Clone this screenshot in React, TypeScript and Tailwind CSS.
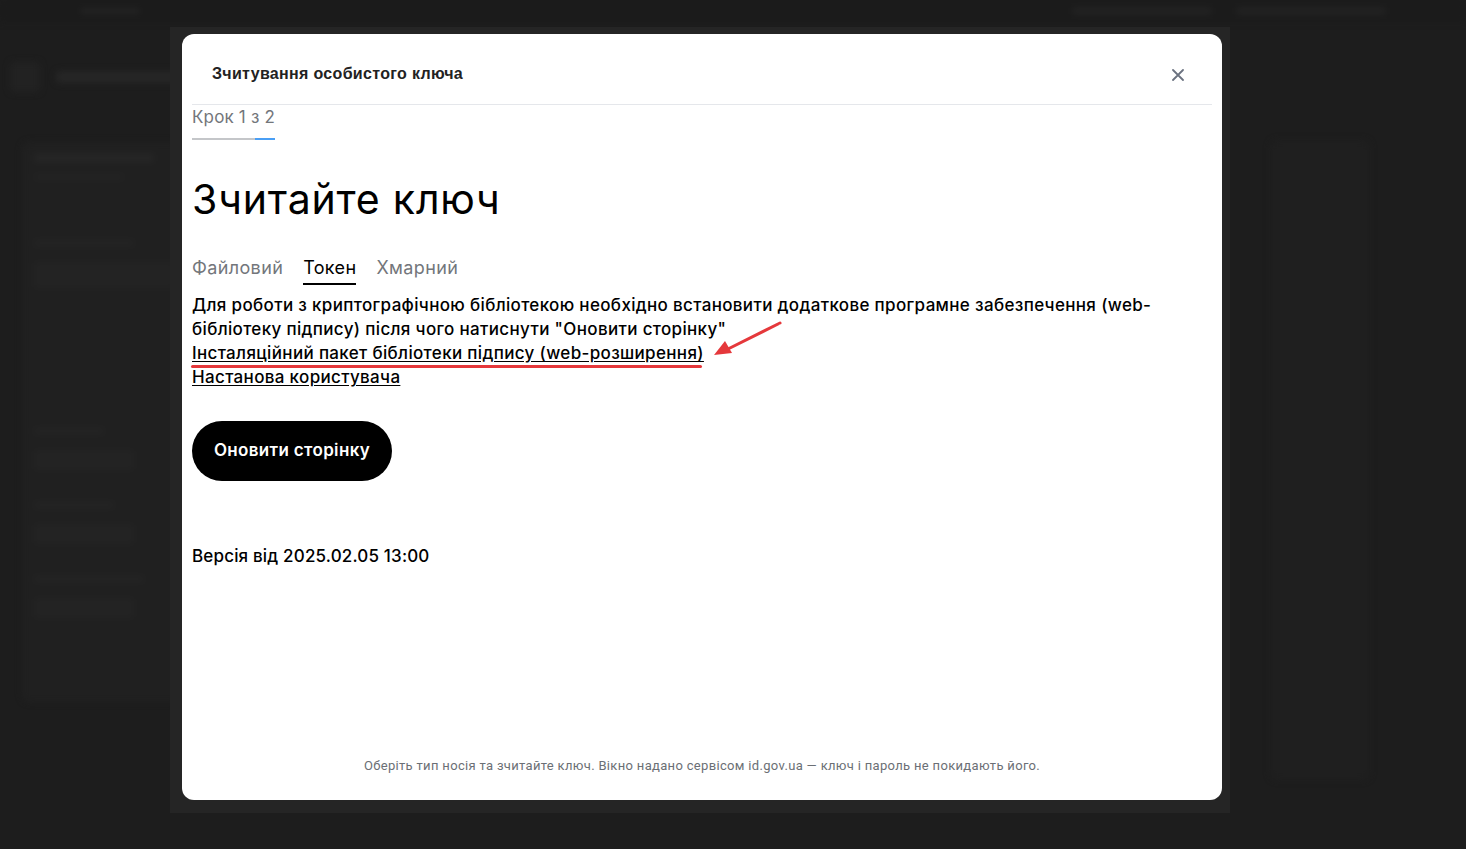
import React from "react";

function Backdrop() {
  // faint, blurred page content behind the dialog
  return (
    <div className="absolute inset-0 blur-[3px]">
      <div className="flex h-[22px] items-center gap-6 bg-[#1b1b1b] px-[80px]">
        <div className="h-[6px] w-[60px] rounded bg-[#232323]" />
        <div className="ml-auto h-[8px] w-[140px] rounded bg-[#222]" />
        <div className="h-[8px] w-[150px] rounded bg-[#222]" />
      </div>
      <div className="mt-[40px] flex items-center gap-4 pl-[10px]">
        <div className="h-[30px] w-[30px] rounded bg-[#222]" />
        <div className="h-[12px] w-[130px] rounded bg-[#262626]" />
      </div>
      <div className="ml-[22px] mt-[50px] h-[560px] w-[160px] rounded-lg bg-[#202020] p-3">
        <div className="h-[8px] w-[120px] rounded bg-[#262626]" />
        <div className="mt-3 h-[6px] w-[90px] rounded bg-[#232323]" />
        <div className="mt-[60px] h-[6px] w-[100px] rounded bg-[#242424]" />
        <div className="mt-4 h-[26px] w-[140px] rounded bg-[#232323]" />
        <div className="mt-[140px] h-[6px] w-[70px] rounded bg-[#242424]" />
        <div className="mt-4 h-[20px] w-[100px] rounded bg-[#232323]" />
        <div className="mt-8 h-[6px] w-[80px] rounded bg-[#242424]" />
        <div className="mt-4 h-[20px] w-[100px] rounded bg-[#232323]" />
        <div className="mt-8 h-[6px] w-[110px] rounded bg-[#242424]" />
        <div className="mt-4 h-[20px] w-[100px] rounded bg-[#232323]" />
      </div>
      <div className="absolute left-[1270px] top-[140px] h-[640px] w-[100px] rounded-lg bg-[#1f1f1f]" />
    </div>
  );
}

export default function App() {
  return (
    <div className="relative h-[849px] w-full overflow-hidden bg-[#1d1d1d] font-['Inter',_'Noto_Sans',_sans-serif]">
      <Backdrop />

      <div className="absolute left-[170px] top-[27px] h-[786px] w-[1060px] bg-[#252525] pl-[12px] pt-[7px]">
        <div className="flex h-[766px] w-[1040px] flex-col rounded-[12px] bg-white">
          {/* header */}
          <div className="flex h-[70px] items-center justify-between pl-[30px] pr-[38px] pt-[10px]">
            <h2 className="font-['Liberation_Sans',_sans-serif] text-[16px] font-bold tracking-[0.02em] text-[#222]">
              Зчитування особистого ключа
            </h2>
            <svg width="12" height="12" viewBox="0 0 12 12" className="mt-[1px]">
              <path d="M1 1L11 11M11 1L1 11" stroke="#6b7280" strokeWidth="1.8" strokeLinecap="round" />
            </svg>
          </div>
          <div className="mx-[10px] h-px bg-[#e5e7eb]" />

          <div className="flex flex-1 flex-col px-[10px]">
            {/* step */}
            <div className="w-[83px]">
              <div className="text-[17px] leading-[24px] tracking-[0.01em] text-[#73767b]">Крок 1 з 2</div>
              <div className="mt-[9px] flex h-[2px]">
                <div className="w-[63px] bg-[#c4c6c9]" />
                <div className="flex-1 bg-[#4a9ff5]" />
              </div>
            </div>

            <h1 className="mt-[35px] text-[41px] leading-[48px] tracking-[0.02em] text-black">Зчитайте ключ</h1>

            {/* tabs */}
            <div className="mt-[33px] flex gap-[20px] text-[18px] leading-[24px] tracking-[0.02em]">
              <span className="text-[#73767b]">Файловий</span>
              <span className="border-b-2 border-black pb-[3px] text-black">Токен</span>
              <span className="text-[#73767b]">Хмарний</span>
            </div>

            <div className="mt-[8px] text-[17px] font-medium leading-[24px] tracking-[0.02em] text-black">
              <p>
                Для роботи з криптографічною бібліотекою необхідно встановити додаткове програмне забезпечення (web-
                <br />
                бібліотеку підпису) після чого натиснути "Оновити сторінку"
              </p>
              <div className="relative w-fit">
                <a className="underline underline-offset-2">
                  Інсталяційний пакет бібліотеки підпису (web-розширення)
                </a>
                <div className="absolute -bottom-[3px] -left-[1px] right-[2px] h-[3px] rounded-full bg-[#e5383b]" />
                <svg
                  width="72"
                  height="40"
                  viewBox="0 0 72 40"
                  className="absolute -right-[80px] -top-[22px]"
                >
                  <path d="M68 4L14 31" stroke="#e5383b" strokeWidth="3" strokeLinecap="round" />
                  <path d="M2 36L13 22L20 34Z" fill="#e5383b" />
                </svg>
              </div>
              <a className="underline underline-offset-2">Настанова користувача</a>
            </div>

            <button className="mt-[32px] h-[60px] w-[200px] rounded-full bg-black text-[17px] font-semibold tracking-[0.02em] text-white">
              Оновити сторінку
            </button>

            <p className="mt-[63px] text-[17px] font-medium leading-[24px] tracking-[0.01em] text-black">
              Версія від 2025.02.05 13:00
            </p>

            <p className="mt-auto pb-[25px] text-center font-['Roboto',_sans-serif] text-[13px] tracking-[0.025em] text-[#6b6f75]">
              Оберіть тип носія та зчитайте ключ. Вікно надано сервісом id.gov.ua — ключ і пароль не покидають його.
            </p>
          </div>
        </div>
      </div>
    </div>
  );
}
